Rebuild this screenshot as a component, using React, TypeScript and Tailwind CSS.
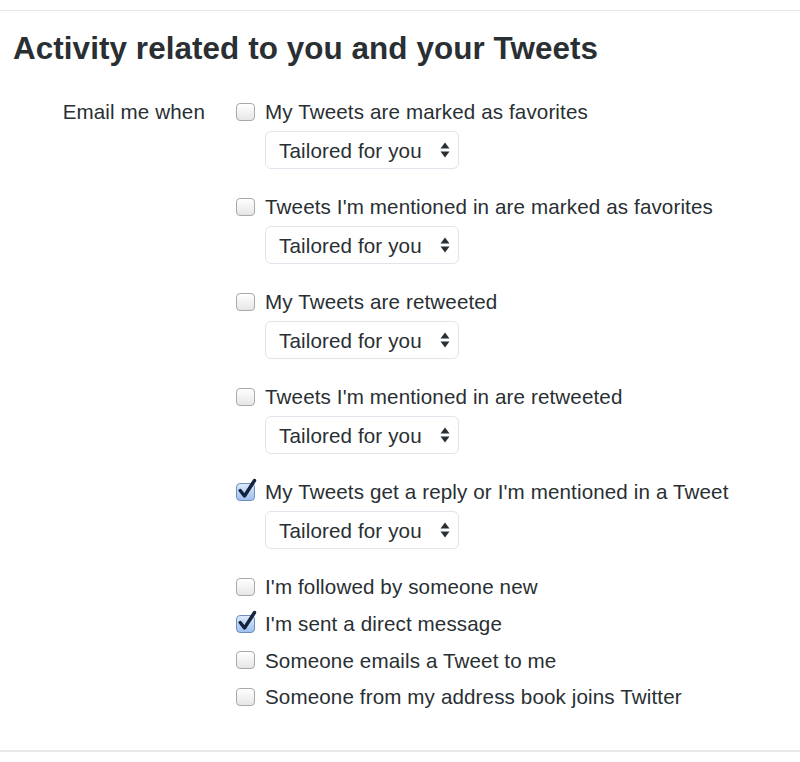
import React from "react";

const ink = "text-[#292f33]";

function Box({ checked }: { checked?: boolean }) {
  if (checked) {
    return (
      <span className="relative block h-[18px] w-[19px] shrink-0">
        <span className="absolute inset-0 rounded-[4px] border border-[#6f8fbf] bg-gradient-to-b from-[#dce9fb] to-[#9fc0ee]" />
        <svg
          className="absolute left-[1px] top-[-5px]"
          width="20"
          height="22"
          viewBox="0 0 20 22"
        >
          <path
            d="M3.2 12.5 L7.5 18 L17.5 2.5"
            fill="none"
            stroke="#14233f"
            strokeWidth="3.4"
            strokeLinecap="round"
            strokeLinejoin="round"
          />
        </svg>
      </span>
    );
  }
  return (
    <span className="block h-[18px] w-[19px] shrink-0 rounded-[4px] border border-[#a9a9a9] bg-gradient-to-b from-[#ffffff] to-[#e6e6e6] shadow-[inset_0_1px_0_#fff]" />
  );
}

function Select() {
  return (
    <div className="mt-[7px] flex h-[38px] w-[194px] items-center justify-between rounded-[6px] border border-[#dfe5ea] bg-white pl-[13px] pr-[8px]">
      <span>Tailored for you</span>
      <svg width="10" height="18" viewBox="0 0 10 18">
        <path d="M5 1.5 L9.5 7.5 L0.5 7.5 Z" fill="#292f33" />
        <path d="M5 16.5 L9.5 10.5 L0.5 10.5 Z" fill="#292f33" />
      </svg>
    </div>
  );
}

function Item({
  label,
  checked,
  select,
  last,
}: {
  label: string;
  checked?: boolean;
  select?: boolean;
  last?: boolean;
}) {
  return (
    <div className={select ? "mb-[25px]" : last ? "" : "mb-[11.7px]"}>
      <div className="flex h-[25px] items-center gap-[10px] whitespace-nowrap">
        <Box checked={checked} />
        <span>{label}</span>
      </div>
      {select && (
        <div className="pl-[29px]">
          <Select />
        </div>
      )}
    </div>
  );
}

export default function App() {
  return (
    <div
      className={`min-h-[762px] w-[800px] bg-white pt-[10px] font-['Liberation_Sans',Arial,sans-serif] ${ink}`}
    >
      <div className="border-t border-[#e1e8ed] border-b-2 border-b-[#e8e8e8] pb-[40.6px]">
        <h2 className="ml-[13px] mt-[19px] text-[31.4px] font-bold leading-[38px] tracking-[0.08px]">
          Activity related to you and your Tweets
        </h2>
        <div className="mt-[31.4px] flex text-[20.6px] leading-[25px] tracking-[0.12px]">
          <div className="w-[205px] shrink-0 text-right">Email me when</div>
          <div className="ml-[31px] flex flex-col">
            <Item label="My Tweets are marked as favorites" select />
            <Item label="Tweets I'm mentioned in are marked as favorites" select />
            <Item label="My Tweets are retweeted" select />
            <Item label="Tweets I'm mentioned in are retweeted" select />
            <Item
              label="My Tweets get a reply or I'm mentioned in a Tweet"
              checked
              select
            />
            <Item label="I'm followed by someone new" />
            <Item label="I'm sent a direct message" checked />
            <Item label="Someone emails a Tweet to me" />
            <Item label="Someone from my address book joins Twitter" last />
          </div>
        </div>
      </div>
    </div>
  );
}
